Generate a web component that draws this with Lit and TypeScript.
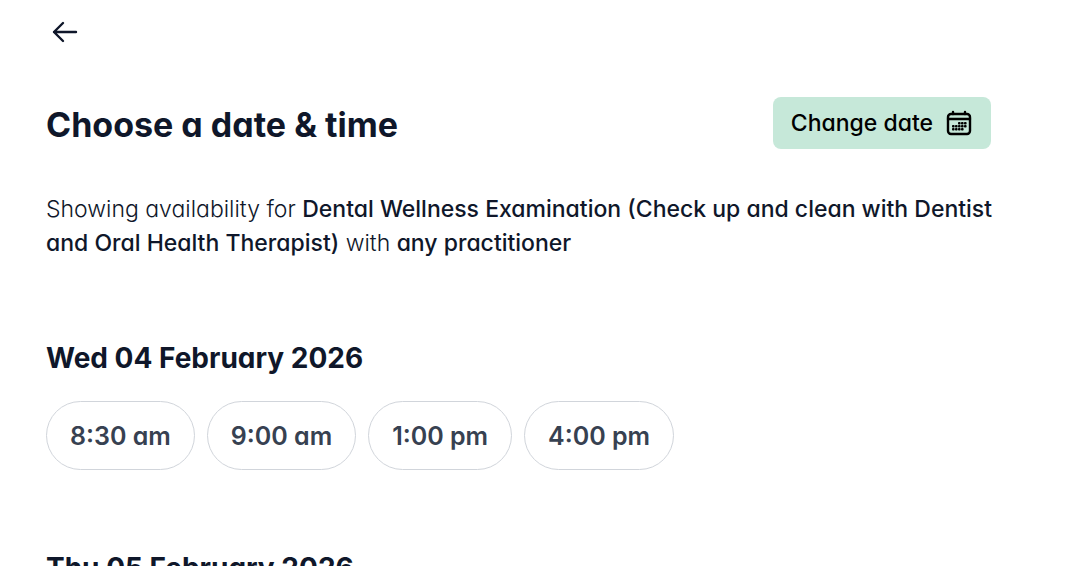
import { LitElement, html, css, svg } from "lit";
import { customElement } from "lit/decorators.js";

interface Day {
  label: string;
  times: string[];
}

const days: Day[] = [
  { label: "Wed 04 February 2026", times: ["8:30 am", "9:00 am", "1:00 pm", "4:00 pm"] },
  { label: "Thu 05 February 2026", times: ["8:30 am", "9:00 am", "1:00 pm", "4:00 pm"] },
];

const calendarDots = [
  [14, 14], [17, 14], [20, 14],
  [8, 17], [11, 17], [14, 17], [17, 17], [20, 17],
  [8, 20], [11, 20], [14, 20], [17, 20],
];

@customElement("app-root")
export class AppRoot extends LitElement {
  static styles = css`
    :host {
      display: block;
      height: 100vh;
      overflow: hidden;
      background: #fff;
      color: #0f172a;
      font-family: Inter, "Liberation Sans", sans-serif;
      font-feature-settings: "cv11";
    }
    .page {
      padding: 16px 68px 0 46px;
    }
    button {
      font: inherit;
      font-feature-settings: inherit;
      cursor: pointer;
    }
    .back {
      display: flex;
      padding: 0 3px;
      border: 0;
      background: none;
      color: inherit;
    }
    .head {
      display: flex;
      align-items: flex-end;
      justify-content: space-between;
      margin-top: 49px;
      padding-right: 8px;
    }
    h1 {
      margin: 0;
      font-size: 34px;
      line-height: 48px;
      font-weight: 700;
    }
    .change {
      display: flex;
      align-items: center;
      gap: 12px;
      height: 52px;
      padding: 0 18px;
      border: 0;
      border-radius: 8px;
      background: #c6e8d9;
      color: #000;
      font-size: 23px;
      font-weight: 500;
    }
    .summary {
      margin: 43px 0 0;
      font-size: 23px;
      line-height: 34px;
      font-weight: 300;
    }
    .summary strong {
      font-weight: 500;
    }
    .day {
      margin-top: 76px;
    }
    h2 {
      margin: 0 0 21px;
      font-size: 28px;
      line-height: 44px;
      font-weight: 700;
    }
    .times {
      display: flex;
      flex-wrap: wrap;
      gap: 12px;
    }
    .time {
      height: 69px;
      padding: 0 23px;
      border: 1px solid #d1d5db;
      border-radius: 35px;
      background: #fff;
      color: #374151;
      font-size: 25px;
      font-weight: 600;
    }
  `;

  render() {
    return html`
      <main class="page">
        <button class="back" aria-label="Back">
          <svg width="32" height="32" viewBox="0 0 32 32" fill="none" stroke="currentColor" stroke-width="2.4" stroke-linecap="round" stroke-linejoin="round">
            <path d="M27 16H5M14 7l-9 9 9 9" />
          </svg>
        </button>
        <header class="head">
          <h1>Choose a date &amp; time</h1>
          <button class="change">
            Change date
            <svg width="28" height="28" viewBox="0 0 28 28" fill="none" stroke="currentColor" stroke-width="2.4" stroke-linecap="round">
              <rect x="3" y="5" width="22" height="20" rx="3" />
              <path d="M3 10h22M8 3v2M20 3v2" />
              ${calendarDots.map(
                ([x, y]) => svg`<rect x=${x - 1} y=${y - 1} width="2.6" height="2.6" rx="0.8" fill="currentColor" stroke="none" />`
              )}
            </svg>
          </button>
        </header>
        <p class="summary">
          Showing availability for
          <strong>Dental Wellness Examination (Check up and clean with Dentist and Oral Health Therapist)</strong>
          with <strong>any practitioner</strong>
        </p>
        ${days.map(
          (day) => html`
            <section class="day">
              <h2>${day.label}</h2>
              <div class="times">
                ${day.times.map((time) => html`<button class="time">${time}</button>`)}
              </div>
            </section>
          `
        )}
      </main>
    `;
  }
}
